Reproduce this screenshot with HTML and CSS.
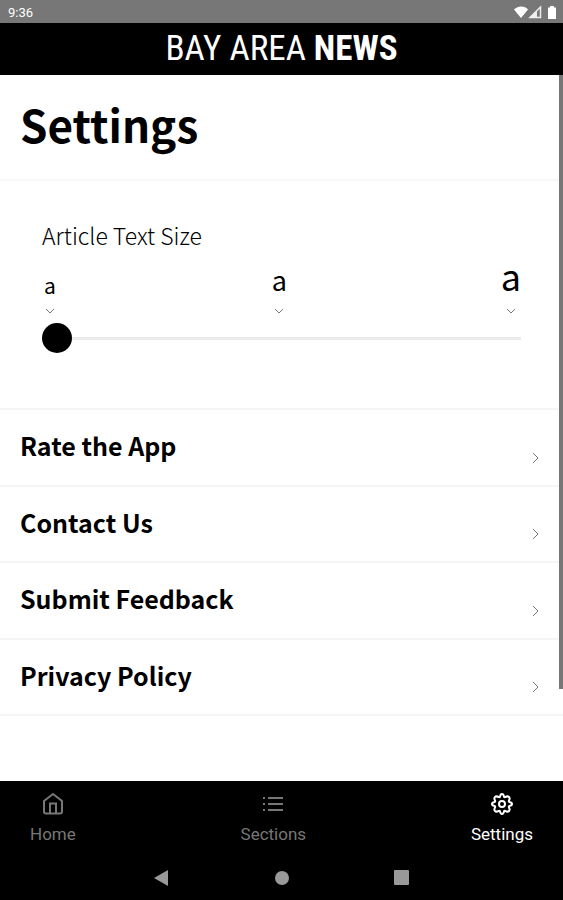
FILE: index.html
```html
<!DOCTYPE html>
<html lang="en">
<head>
<meta charset="utf-8">
<meta name="viewport" content="width=device-width, initial-scale=1">
<title>Settings</title>
<link rel="stylesheet" href="styles.css">
</head>
<body>
<div class="status-bar">
  <span>9:36</span>
  <svg class="status-icons" viewBox="0 0 44 16" width="44" height="16" aria-hidden="true">
    <path d="M1 4.500C5 .5 12 .5 15 4.500L8 13z" fill="#fff"/>
    <path d="M27.500 2v10.500H17z" fill="none" stroke="#eee" stroke-width="1.500"/>
    <path d="M24 6v6h-7z" fill="#eee"/>
    <path d="M35 2.500h2V1h4v1.500h2V14h-8z" fill="#fff"/>
  </svg>
</div>
<header class="brand">BAY AREA <strong>NEWS</strong></header>
<main class="content">
  <div class="scroll-thumb"></div>
  <h1 class="title">Settings</h1>
  <section class="text-size">
    <label class="text-size-label" for="size">Article Text Size</label>
    <div class="marks" aria-hidden="true">
      <div class="mark mark-small">a<svg class="tick" viewBox="0 0 10 6" width="10" height="6"><path d="M1 1l4 4 4-4"/></svg></div>
      <div class="mark mark-medium">a<svg class="tick" viewBox="0 0 10 6" width="10" height="6"><path d="M1 1l4 4 4-4"/></svg></div>
      <div class="mark mark-large">a<svg class="tick" viewBox="0 0 10 6" width="10" height="6"><path d="M1 1l4 4 4-4"/></svg></div>
    </div>
    <input class="slider" id="size" type="range" min="0" max="2" value="0">
  </section>
  <nav class="links">
    <a class="link" href="#rate">Rate the App<svg class="chevron" viewBox="0 0 8 12" width="8" height="12"><path d="M1 1l5 5-5 5"/></svg></a>
    <a class="link" href="#contact">Contact Us<svg class="chevron" viewBox="0 0 8 12" width="8" height="12"><path d="M1 1l5 5-5 5"/></svg></a>
    <a class="link" href="#feedback">Submit Feedback<svg class="chevron" viewBox="0 0 8 12" width="8" height="12"><path d="M1 1l5 5-5 5"/></svg></a>
    <a class="link" href="#privacy">Privacy Policy<svg class="chevron" viewBox="0 0 8 12" width="8" height="12"><path d="M1 1l5 5-5 5"/></svg></a>
  </nav>
</main>
<footer class="bottom">
  <nav class="tabs">
    <a class="tab" href="#home">
      <svg viewBox="0 0 24 24" width="24" height="24"><path d="M3 9l9-7 9 7v10.500a2 2 0 0 1-2 2H5a2 2 0 0 1-2-2zM9 21v-9.500h6V21"/></svg>
      Home</a>
    <a class="tab" href="#sections">
      <svg viewBox="0 0 24 24" width="24" height="24"><path d="M7 6h15M7 12h15M7 18h15M2 6h2M2 12h2M2 18h2"/></svg>
      Sections</a>
    <a class="tab tab-active" href="#settings">
      <svg viewBox="0 0 24 24" width="24" height="24"><path d="M12 2Q13.500 2 14 4.600Q14.300 5.400 15.200 5.100Q17.800 3.700 19 5Q20.300 6.200 18.900 8.800Q18.600 9.700 19.400 10Q22 10.500 22 12Q22 13.500 19.400 14Q18.600 14.300 18.900 15.200Q20.300 17.800 19 19Q17.800 20.300 15.200 18.900Q14.300 18.600 14 19.400Q13.500 22 12 22Q10.500 22 10 19.400Q9.700 18.600 8.800 18.900Q6.200 20.300 5 19Q3.700 17.800 5.100 15.200Q5.400 14.300 4.600 14Q2 13.500 2 12Q2 10.500 4.600 10Q5.400 9.700 5.100 8.800Q3.700 6.200 5 5Q6.200 3.700 8.800 5.100Q9.700 5.400 10 4.600Q10.500 2 12 2z"/><circle cx="12" cy="12" r="3"/></svg>
      Settings</a>
  </nav>
  <div class="system">
    <button class="key" type="button" aria-label="Back"><svg viewBox="0 0 16 16" width="16" height="16"><path d="M0 8L14 0v16z"/></svg></button>
    <button class="key" type="button" aria-label="Home screen"><svg viewBox="0 0 16 16" width="16" height="16"><circle cx="8" cy="8" r="7"/></svg></button>
    <button class="key" type="button" aria-label="Recent apps"><svg viewBox="0 0 16 16" width="16" height="16"><rect width="15" height="15" x="0" y="0" rx="1"/></svg></button>
  </div>
</footer>
</body>
</html>
```
FILE: styles.css
```css
* {
  box-sizing: border-box;
}

body {
  margin: 0;
  min-height: 100vh;
  display: flex;
  flex-direction: column;
  background: #fff;
  color: #000;
  font-family: "Noto Sans CJK SC", "Noto Sans", sans-serif;
}

a {
  color: inherit;
  text-decoration: none;
}

svg {
  display: block;
}

.status-bar {
  display: flex;
  align-items: center;
  justify-content: space-between;
  height: 23px;
  padding: 2px 6px 0 8px;
  background: #777;
  color: #fff;
  font: 13px/20px Roboto, sans-serif;
}

.brand {
  height: 52px;
  background: #000;
  color: #fff;
  text-align: center;
  font: 35px/52px "Liberation Sans Narrow", "Roboto Condensed", "Open Sans Condensed", Lato, sans-serif;
}

.content {
  position: relative;
  flex: 1;
  display: flex;
  flex-direction: column;
}

.scroll-thumb {
  position: absolute;
  top: 0;
  right: 0;
  width: 4px;
  height: 87%;
  background: #777;
}

.title {
  margin: 0;
  padding: 18px 20px 24px;
  border-bottom: 2px solid #f7f7f7;
  font-size: 44px;
  line-height: 62px;
  font-weight: 700;
}

.text-size {
  display: flex;
  flex-direction: column;
  padding: 38px 42px 55px;
}

.text-size-label {
  font-size: 23px;
  line-height: 32px;
  font-weight: 300;
}

.marks {
  display: flex;
  justify-content: space-between;
  align-items: flex-end;
  height: 63px;
}

.mark {
  display: flex;
  flex-direction: column;
  align-items: center;
  min-width: 16px;
  line-height: 40px;
}

.mark-small {
  gap: 3px;
  font-size: 21px;
}

.mark-medium {
  gap: 8px;
  font-size: 27px;
}

.mark-large {
  gap: 13px;
  font-size: 36px;
}

.tick,
.chevron {
  fill: none;
  stroke: #777;
}

.slider {
  appearance: none;
  width: 100%;
  height: 30px;
  margin: 9px 0 0;
  background: transparent;
}

.slider::-webkit-slider-runnable-track {
  height: 3px;
  background: #ebebeb;
}

.slider::-webkit-slider-thumb {
  appearance: none;
  width: 30px;
  height: 30px;
  margin-top: -14px;
  border-radius: 50%;
  background: #000;
}

.links {
  flex: 1;
  display: grid;
  grid-auto-rows: 1fr;
  padding-bottom: 65px;
  border-top: 2px solid #f5f5f5;
}

.link {
  display: flex;
  align-items: center;
  justify-content: space-between;
  padding: 0 23px 4px 20px;
  border-bottom: 2px solid #f5f5f5;
  font-size: 25px;
  line-height: 36px;
  font-weight: 700;
}

.chevron {
  align-self: flex-end;
  margin-bottom: 17px;
}

.bottom {
  background: #000;
  color: #777;
  font: 17px/20px Roboto, sans-serif;
}

.tabs {
  display: flex;
  justify-content: space-between;
  padding: 11px 30px 0;
}

.tab {
  display: flex;
  flex-direction: column;
  align-items: center;
  gap: 8px;
}

.tab svg {
  fill: none;
  stroke: currentColor;
  stroke-width: 2;
}

.tab-active {
  color: #fff;
}

.system {
  display: flex;
  justify-content: center;
  gap: 104px;
  padding: 26px 0 14px;
}

.key {
  padding: 0;
  border: 0;
  background: none;
}

.key svg {
  fill: #999;
}
```
